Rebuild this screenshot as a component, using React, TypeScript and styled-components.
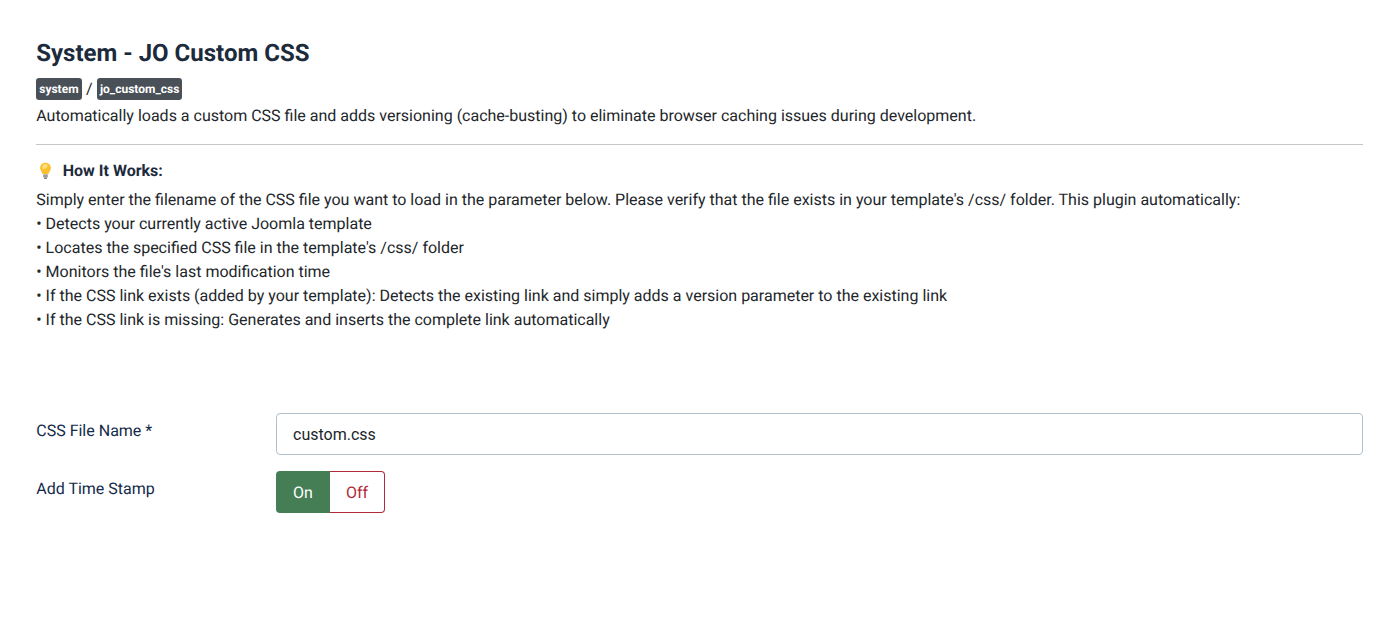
import React from "react";
import styled, { createGlobalStyle } from "styled-components";

const Global = createGlobalStyle`
  html, body { margin: 0; padding: 0; background: #fff; }
  body { font-family: Roboto, "Liberation Sans", sans-serif; font-size: 16px; line-height: 24px; color: #22262a; text-rendering: geometricPrecision; }
`;

const Page = styled.main`
  padding: 36px 11px 0 36.25px;
`;

const Title = styled.h1`
  margin: 0;
  font-size: 24px;
  line-height: 34px;
  font-weight: 700;
  color: #1c2b3c;
`;

const BadgeRow = styled.div`
  display: flex;
  align-items: center;
  height: 24px;
  margin: 7px 0 3px;
  font-size: 16px;
`;

const Badge = styled.span`
  display: inline-block;
  padding: 0 3px;
  height: 22px;
  line-height: 22px;
  border-radius: 3.2px;
  background: #495057;
  color: #fff;
  font-size: 12px;
  font-weight: 700;
`;

const Slash = styled.span`
  margin: 0 4.4px;
`;

const Description = styled.p`
  margin: 0;
  height: 24px;
`;

const Divider = styled.hr`
  margin: 16px 0 0;
  border: 0;
  border-top: 1px solid #c4c7ca;
`;

const HowHeading = styled.div`
  display: flex;
  align-items: center;
  height: 24px;
  margin-top: 14px;
  font-weight: 700;
  color: #1c2b3c;
`;

const Bulb = styled.svg`
  width: 18px;
  height: 18px;
  margin-right: 8.5px;
  flex: none;
`;

const Steps = styled.div`
  margin-top: 5px;
`;

const Line = styled.div`
  height: 24px;
  white-space: nowrap;
`;

const FormArea = styled.section`
  margin-top: 81px;
  display: grid;
  grid-template-columns: 239.75px 1fr;
  row-gap: 16px;
`;

const Label = styled.label`
  color: #132a4a;
  line-height: 24px;
  padding-top: 6px;
`;

const TextInput = styled.input`
  box-sizing: border-box;
  width: 100%;
  height: 42px;
  padding: 0 16px;
  border: 1px solid #b2bfcd;
  border-radius: 4px;
  background: #fff;
  font: inherit;
  color: #22262a;
  outline: none;
`;

const Switcher = styled.div`
  display: inline-flex;
  height: 42px;
`;

const On = styled.span`
  box-sizing: border-box;
  width: 54px;
  padding-top: 1px;
  display: flex;
  align-items: center;
  justify-content: center;
  background: #457d54;
  color: #fff;
  border-radius: 4px 0 0 4px;
`;

const Off = styled.span`
  box-sizing: border-box;
  width: 55px;
  padding-top: 1px;
  display: flex;
  align-items: center;
  justify-content: center;
  background: #fff;
  color: #b02a37;
  border: 1px solid #b02a37;
  border-left: 0;
  border-radius: 0 4px 4px 0;
`;

export default function App() {
  return (
    <Page>
      <Global />
      <Title>System - JO Custom CSS</Title>
      <BadgeRow>
        <Badge>system</Badge>
        <Slash>/</Slash>
        <Badge>jo_custom_css</Badge>
      </BadgeRow>
      <Description>
        Automatically loads a custom CSS file and adds versioning (cache-busting) to eliminate browser caching issues during development.
      </Description>
      <Divider />
      <HowHeading>
        <Bulb viewBox="0 0 18 18" aria-hidden="true">
          <path d="M9.500 .8c-3.200 0-5.400 2.400-5.400 5.300 0 2.400 1.800 3.600 2.500 6h5.800c.7-2.400 2.500-3.600 2.500-6C14.900 3.200 12.700.8 9.500 .8z" fill="#fbc02d" />
          <path d="M9.500 2c-1.900 0-3.200 1.500-3.200 3.200 0 1.100.7 1.800 1.700 1.800C9.900 7 11.600 5.200 11.600 3.100 11.100 2.400 10.300 2 9.500 2z" fill="#ffe082" />
          <rect x="7.100" y="12.200" width="4.800" height="3.400" rx="0.8" fill="#9e9e9e" />
          <rect x="8" y="15.600" width="3" height="1.400" rx="0.7" fill="#757575" />
        </Bulb>
        How It Works:
      </HowHeading>
      <Steps>
        <Line>Simply enter the filename of the CSS file you want to load in the parameter below. Please verify that the file exists in your template's /css/ folder. This plugin automatically:</Line>
        <Line>• Detects your currently active Joomla template</Line>
        <Line>• Locates the specified CSS file in the template's /css/ folder</Line>
        <Line>• Monitors the file's last modification time</Line>
        <Line>• If the CSS link exists (added by your template): Detects the existing link and simply adds a version parameter to the existing link</Line>
        <Line>• If the CSS link is missing: Generates and inserts the complete link automatically</Line>
      </Steps>
      <FormArea>
        <Label htmlFor="css-file">CSS File Name *</Label>
        <TextInput id="css-file" defaultValue="custom.css" />
        <Label>Add Time Stamp</Label>
        <div>
          <Switcher>
            <On>On</On>
            <Off>Off</Off>
          </Switcher>
        </div>
      </FormArea>
    </Page>
  );
}
